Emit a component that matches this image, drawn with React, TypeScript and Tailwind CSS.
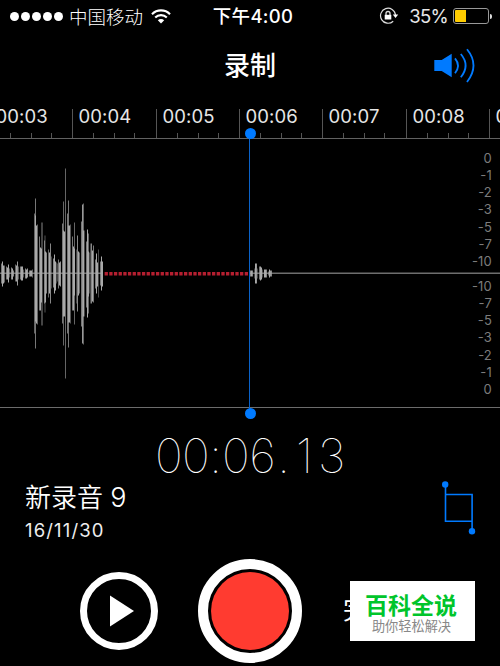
import clsx from "clsx"

const ticks = [
  { x: -11, label: "00:03" },
  { x: 72, label: "00:04" },
  { x: 156, label: "00:05" },
  { x: 239, label: "00:06" },
  { x: 322, label: "00:07" },
  { x: 406, label: "00:08" },
  { x: 489, label: "00:09" },
]

const levels = ["0", "-1", "-2", "-3", "-5", "-7", "-10"]

// x, height above the axis, height below the axis, opacity
const samples = [
  [1, 10, 10, 0.7], [2, 12, 13, 1], [3, 8, 10, 1], [4, 8, 9, 0.6],
  [6, 7, 6, 0.7], [7, 6, 6, 1], [8, 9, 9, 1], [9, 5, 4, 0.5],
  [11, 6, 6, 0.8], [12, 5, 6, 1], [13, 3, 3, 0.8],
  [15, 9, 8, 0.6], [16, 8, 8, 1], [17, 12, 12, 0.9], [18, 7, 6, 0.5],
  [20, 7, 6, 0.7], [21, 7, 7, 1], [22, 7, 7, 1], [23, 4, 4, 0.5],
  [25, 5, 5, 0.8], [26, 4, 5, 1], [27, 5, 4, 0.9],
  [29, 3, 3, 0.7], [30, 3, 3, 1], [31, 3, 3, 1], [32, 4, 4, 0.6],
  [34, 60, 60, 0.6], [35, 75, 75, 0.7], [35, 58, 48, 1], [36, 48, 50, 1], [37, 49, 51, 0.6],
  [39, 37, 37, 0.7], [40, 26, 37, 1], [41, 25, 29, 1], [41, 51, 52, 0.4], [42, 51, 52, 0.4],
  [44, 33, 30, 0.7], [45, 22, 29, 1], [44.5, 38, 39, 0.5], [46, 21, 20, 0.8],
  [48, 24, 24, 0.6], [49, 21, 20, 1], [50, 30, 30, 0.8], [51, 17, 15, 0.4],
  [53, 15, 14, 0.8], [54, 19, 20, 1], [55, 12, 17, 1], [56, 11, 10, 0.4],
  [57, 10, 8, 0.4], [58, 14, 15, 0.7], [59, 11, 12, 1], [60, 12, 13, 0.9],
  [62, 50, 50, 0.7], [63, 72, 72, 0.6], [63, 43, 43, 1], [64, 42, 43, 1],
  [65, 105, 105, 0.6],
  [67, 60, 60, 0.7], [68, 73, 74, 0.7], [68, 48, 49, 1], [69, 48, 49, 1], [70, 49, 50, 0.5],
  [72, 37, 37, 0.7], [73, 27, 37, 1], [74, 51, 51, 0.6], [74, 25, 22, 1],
  [76, 24, 30, 0.4], [77, 38, 38, 0.8], [78, 22, 22, 1], [79, 21, 20, 0.6],
  [81, 52, 53, 0.7], [82, 69, 70, 0.9], [83, 70, 71, 0.6], [83, 43, 43, 1], [84, 43, 43, 0.4],
  [86, 32, 34, 0.7], [87, 44, 44, 1], [88, 40, 40, 0.6], [88, 22, 23, 1], [89, 21, 20, 0.4],
  [90, 30, 30, 0.4], [91, 30, 30, 0.8], [92, 23, 28, 1], [93, 28, 29, 0.7],
  [95, 14, 15, 0.7], [96, 20, 20, 1], [97, 11, 13, 1], [98, 24, 24, 0.4],
  [100, 12, 12, 0.7], [101, 17, 17, 1], [102, 12, 13, 1],
  [250, 3, 3, 0.8], [251, 3, 3, 1], [252, 3, 3, 0.8],
  [254, 5, 5, 0.4], [255, 10, 10, 1], [256, 10, 10, 0.9], [257, 5, 5, 0.4],
  [259, 7, 6, 0.7], [260, 7, 7, 1], [261, 6, 6, 1], [262, 4, 4, 0.4],
  [264, 4, 4, 1], [265, 4, 4, 1], [266, 4, 4, 0.8],
  [268, 2, 2, 0.6], [269, 4, 4, 1], [270, 3, 3, 0.9], [271, 3, 3, 0.8],
]

const StatusBar = () => (
  <header className="relative flex h-8 items-center justify-between pl-[10px] pr-[8px]">
    <div className="flex items-center">
      <div className="flex gap-[2px]">
        {[0, 1, 2, 3, 4].map((dot) => (
          <span key={dot} className="size-[9px] rounded-full bg-white" />
        ))}
      </div>
      <span className="ml-[6px] pt-px text-[18.5px] leading-8 font-light">中国移动</span>
      <svg className="ml-[8px] h-[15px] w-5" viewBox="0 0 20 15" fill="none" stroke="#fff">
        <path d="M1 5.2a12.6 12.6 0 0 1 18 0" strokeWidth="2.1" />
        <path d="M4.2 8.5a8.2 8.2 0 0 1 11.6 0" strokeWidth="2.1" />
        <path d="M10 14.5 6.8 11.3a4.5 4.5 0 0 1 6.4 0Z" fill="#fff" stroke="none" />
      </svg>
    </div>
    <div className="absolute inset-x-0 top-0 pl-[6px] text-center text-[18.5px] leading-8 font-medium tracking-[0.3px]">
      下午4:00
    </div>
    <div className="flex items-center">
      <svg className="mr-[10px] h-[18px] w-5" viewBox="0 0 20 18" fill="none" stroke="#ddd">
        <path d="M14.2 14.2A7.5 7.5 0 1 1 16.5 8" strokeWidth="1.2" />
        <path d="M13.8 7.6h5.4l-2.7 3.5Z" fill="#fff" stroke="none" />
        <path d="M7 8.3V6.5a2 2 0 0 1 4 0v1.8" strokeWidth="1.3" />
        <path d="M5.7 7.8h6.6v4.7H5.7z" fill="#fff" stroke="none" />
      </svg>
      <span className="text-[18.5px] leading-8 tracking-[-0.7px] text-[#e8e8e8]">35%</span>
      <div className="ml-[5px] flex h-4 w-9 rounded-[3px] border border-[#999] p-px">
        <span className="w-[11px] rounded-l-[1px] bg-[#ffcc00]" />
      </div>
      <span className="ml-px h-[5px] w-[2px] rounded-r-full bg-[#ddd]" />
    </div>
  </header>
)

const Ruler = () => (
  <div className="relative h-[39px] overflow-hidden border-b border-[#626262]">
    {ticks.map(({ x, label }) => (
      <div key={label} className="absolute bottom-0 h-[29px] w-[84px]" style={{ left: x }}>
        <span className="absolute bottom-0 left-0 h-[29px] w-px bg-[#555]" />
        <span className="absolute bottom-0 left-[21px] h-[5px] w-px bg-[#555]" />
        <span className="absolute bottom-0 left-[42px] h-[5px] w-px bg-[#555]" />
        <span className="absolute bottom-0 left-[62px] h-[5px] w-px bg-[#555]" />
        <span className="absolute top-[-3px] left-[6.5px] text-[18.5px] leading-5 tracking-[0.1px] text-[#e6e6e6]">
          {label}
        </span>
      </div>
    ))}
  </div>
)

const Waveform = () => (
  <svg className="absolute inset-0 h-[268px] w-[500px]" viewBox="0 139 500 268">
    <path d="M0 273.25H500" stroke="#6e6e6e" strokeWidth="1.3" />
    {samples.map(([x, up, down, opacity], i) => (
      <rect key={i} x={x} y={273.5 - up} width="1" height={up + down} fill="#a9a9a9" opacity={opacity} />
    ))}
    <path d="M103 273.3H249" stroke="#000" strokeWidth="3" />
    <path d="M104.6 273.8H249" stroke="#b51f30" strokeWidth="3.6" strokeDasharray="3.3 1.37" />
  </svg>
)

const Scale = ({ items, className }) => (
  <div className={clsx("absolute right-[8px] text-right text-[13px] text-[#7c7c7c]", className)}>
    {items.map((level) => (
      <div key={level} className="h-[17.25px] leading-[17.25px] tracking-[0.2px]">
        {level}
      </div>
    ))}
  </div>
)

export default function App() {
  return (
    <div
      lang="zh-CN"
      className="flex h-[666px] w-[500px] flex-col overflow-hidden bg-black font-['Inter','Noto_Sans_CJK_SC',sans-serif] whitespace-nowrap text-white"
    >
      <StatusBar />

      <div className="relative flex h-[68px] items-center justify-center">
        <h1 className="text-[26px] leading-8 font-medium">录制</h1>
        <svg className="absolute top-[15px] right-[24px] h-9 w-[44px]" viewBox="432 47 44 36" fill="none" stroke="#007aff">
          <path d="M434.3 60h7.4l10-6.3v23.6l-10-6.3h-7.4z" fill="#007aff" stroke="none" />
          <path d="M455 58.3q6 7.2 0 15" strokeWidth="1.8" />
          <path d="M460.8 54q9.6 11.4 0 23.2" strokeWidth="1.8" />
          <path d="M467 49.3q13 16 0 32.7" strokeWidth="1.8" />
        </svg>
      </div>

      <div className="relative">
        <Ruler />
        <div className="relative h-[269px] border-b border-[#6c6c6c]">
          <Waveform />
          <Scale items={levels} className="top-[10.5px]" />
          <Scale items={[...levels].reverse()} className="top-[138.5px]" />
        </div>
        <div className="absolute top-[33px] left-[249px] h-[280px] w-px bg-[#0a62c8]" />
        <span className="absolute top-[28px] left-[244.5px] size-[11px] rounded-full bg-[#007aff]" />
        <span className="absolute top-[307.5px] left-[244.5px] size-[11px] rounded-full bg-[#007aff]" />
      </div>

      <div className="mt-[21px] flex h-[53px] justify-center text-center text-[47px] leading-[53px] font-[100] text-white">
        {"00:06.13".split("").map((char, i) => (
          <span key={i} className={clsx(char === ":" ? "w-[13px]" : char === "." ? "w-[15px]" : "w-[27px]")}>
            {char}
          </span>
        ))}
      </div>

      <div className="flex h-[66px] justify-between pr-[24px] pl-[25px]">
        <div>
          <div className="h-8 text-[26px] leading-8 font-[350]">
            新录音 <span className="text-[27px]">9</span>
          </div>
          <div className="mt-[4px] text-[18.5px] leading-6 tracking-[1.15px] text-[#eee]">16/11/30</div>
        </div>
        <svg className="h-[54px] w-[34px] overflow-visible" viewBox="442 482 34 54" fill="none" stroke="#007aff">
          <path d="M445.5 484v37.2h26.6M445.5 494.5h26.6V532" strokeWidth="1.6" />
          <circle cx="445.2" cy="484.5" r="3.2" fill="#007aff" stroke="none" />
          <circle cx="472" cy="531.3" r="3.2" fill="#007aff" stroke="none" />
        </svg>
      </div>

      <div className="relative flex flex-1 items-start pl-[80px]">
        <button className="mt-[24px] flex size-[78px] items-center justify-center rounded-full border-[7px] border-white">
          <svg className="ml-[5px] h-8 w-6" viewBox="0 0 24 32">
            <path d="M0 .5v31L24 16z" fill="#fff" />
          </svg>
        </button>
        <button className="mt-[11px] ml-[40px] flex size-[104px] items-center justify-center rounded-full border-[10.5px] border-white p-[2px]">
          <span className="size-[78px] rounded-full bg-[#ff3b30]" />
        </button>
        <span className="mt-[46px] ml-[41px] text-[25px] leading-8">完成</span>
        <div className="absolute top-[33px] left-[350px] h-[60px] w-[125px] bg-white text-center font-['Noto_Sans_CJK_SC',sans-serif]">
          <div className="mt-[8px] pr-[3px] text-[23px] leading-[30px] font-bold text-[#00c52b]">百科全说</div>
          <div className="mt-[-1px] pr-[2px] text-[13.2px] leading-4 text-[#888]">助你轻松解决</div>
        </div>
      </div>
    </div>
  )
}
